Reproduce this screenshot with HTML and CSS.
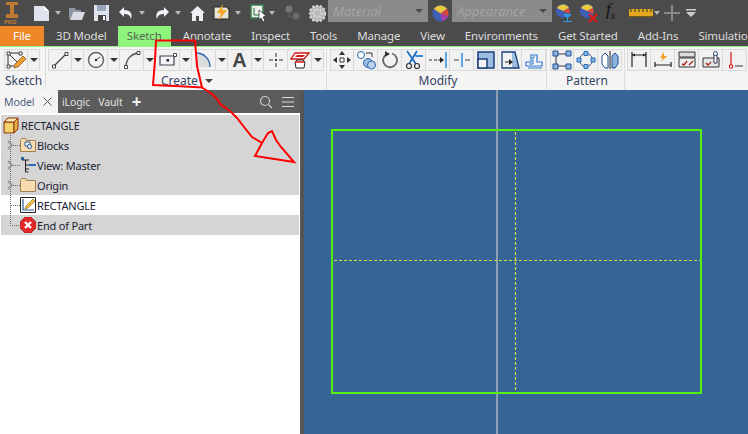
FILE: index.html
```html
<!DOCTYPE html>
<html lang="en">
<head>
    <meta charset="UTF-8">
    <meta name="viewport" content="width=device-width, initial-scale=1.0">
    <title>RECTANGLE - Sketch</title>
    <link rel="stylesheet" href="styles.css">
</head>
<body>
    <!-- quick access toolbar -->
    <div class="quick">
        <svg width="18" height="24" viewBox="0 0 18 24"><path d="M3 1h12v3h-4v9h4v4H3v-4h4V4H3z" fill="#c07a30"/><text x="1" y="23" class="pro">PRO</text></svg>
        <svg width="15" height="16" viewBox="0 0 15 16"><path d="M0 1h10l5 5v10H0z" fill="#dfe3ee"/><path d="M10 1l5 5h-5z" fill="#fff"/></svg>
        <i class="drop light"></i>
        <svg width="16" height="14" viewBox="0 0 16 14"><path d="M0 2h6l1 2h5v2H4L1 13H0z" fill="#8d97a8"/><path d="M4 6h12l-3 8H1z" fill="#d8dbe2"/></svg>
        <svg width="15" height="16" viewBox="0 0 15 16"><path d="M0 0h15v16H0z" fill="#dfe3ee"/><path d="M3 0h9v6H3z" fill="#9aa6be"/><path d="M4 10h8v6H4z" fill="#444"/><path d="M9 11h2v4H9z" fill="#fff"/></svg>
        <svg width="15" height="14" viewBox="0 0 15 14"><path d="M6 1L1 6l5 5V8c4 0 6 1 7 5 2-6-1-9-7-9z" fill="#eef0f5"/></svg>
        <i class="drop light"></i>
        <svg width="15" height="14" viewBox="0 0 15 14"><path d="M9 1l5 5-5 5V8C5 8 3 9 2 13 0 7 3 4 9 4z" fill="#eef0f5"/></svg>
        <i class="drop light"></i>
        <svg width="15" height="15" viewBox="0 0 15 15"><path d="M7.5 0L15 7h-2v8H9v-5H6v5H2V7H0z" fill="#eceef2"/></svg>
        <svg width="17" height="18" viewBox="0 0 17 18"><path d="M1 3h13l2 3v9H1z" fill="#e8e4d4" stroke="#222"/><path d="M10 0L4 9h4l-2 7 8-10H9z" fill="#f5a623"/></svg>
        <i class="drop light"></i>
        <svg width="17" height="18" viewBox="0 0 17 18"><path d="M1 1h12v13H1z" fill="#eef1ee" stroke="#3b7d4d" stroke-width="1.5"/><path d="M4 4v7h6" fill="none" stroke="#1d6b35"/><path d="M9 6l7 6-3 1 2 4-2 1-2-4-2 2z" fill="#fff" stroke="#222" stroke-width=".7"/></svg>
        <i class="drop light"></i>
        <svg width="16" height="16" viewBox="0 0 16 16"><circle cx="5" cy="4" r="3.5" fill="#777"/><circle cx="12" cy="11" r="3.5" fill="#6b6b6b"/><path d="M5 8v4h3" stroke="#666" fill="none"/></svg>
        <svg width="17" height="17" viewBox="0 0 17 17"><circle cx="8.5" cy="8.5" r="8" fill="#b9b9b9"/><circle cx="8.5" cy="8.5" r="8" fill="none" stroke="#ddd" stroke-width="2" stroke-dasharray="2 2"/><circle cx="8.5" cy="8.5" r="4" fill="none" stroke="#eee" stroke-width="2" stroke-dasharray="1 2"/></svg>
        <div class="combo"><em>Material</em><i class="drop dim"></i></div>
        <svg width="17" height="17" viewBox="0 0 17 17"><circle cx="8.5" cy="8.5" r="8" fill="#3f5fb5"/><path d="M8.5 8.5L2 4a8 8 0 0 1 13-.2z" fill="#e8c83c"/><path d="M8.5 8.5L15 3.8a8 8 0 0 1 1 7.5z" fill="#d9483b"/><path d="M8.5 8.5l7.5 2.8a8 8 0 0 1-6 5z" fill="#a63fa8"/></svg>
        <div class="combo"><em>Appearance</em><i class="drop dim"></i></div>
        <svg width="17" height="19" viewBox="0 0 17 19"><circle cx="7" cy="7" r="7" fill="#3f5fb5"/><path d="M7 7L1 4a7 7 0 0 1 12 0z" fill="#e8c83c"/><path d="M7 7l6-3a7 7 0 0 1 0 6z" fill="#d9483b"/><path d="M7 10h9l-4 4v3h4v1H7v-1h4v-3z" fill="#2aa0e0"/></svg>
        <svg width="18" height="19" viewBox="0 0 18 19"><circle cx="7" cy="7" r="7" fill="#3f5fb5"/><path d="M7 7L1 4a7 7 0 0 1 12 0z" fill="#e8c83c"/><path d="M7 7l6-3a7 7 0 0 1 0 6z" fill="#d9483b"/><path d="M9 10l8 8M17 10l-8 8" stroke="#e01818" stroke-width="2.2"/></svg>
        <span class="fx">f<sub>x</sub></span>
        <svg width="24" height="8" viewBox="0 0 24 8"><path d="M0 0h24v8H0z" fill="#e2a91f"/><path d="M2 0v3M6 0v3M10 0v3M14 0v3M18 0v3M22 0v3" stroke="#333"/><path d="M0 7.5h24" stroke="#7a5a10"/></svg>
        <i class="drop light"></i>
        <svg width="16" height="16" viewBox="0 0 16 16"><path d="M7 0h2v7h7v2H9v7H7V9H0V7h7z" fill="#8a8a8a"/></svg>
        <svg width="10" height="8" viewBox="0 0 10 8"><path d="M0 0h10v1.500H0zM0 3h10L5 8z" fill="#ccc"/></svg>
    </div>

    <nav class="tabs">
        <span class="tab file">File</span>
        <span class="tab">3D Model</span>
        <span class="tab active">Sketch</span>
        <span class="tab">Annotate</span>
        <span class="tab">Inspect</span>
        <span class="tab">Tools</span>
        <span class="tab">Manage</span>
        <span class="tab">View</span>
        <span class="tab">Environments</span>
        <span class="tab">Get Started</span>
        <span class="tab">Add-Ins</span>
        <span class="tab">Simulation</span>
    </nav>

    <div class="ribbon">
        <section class="panel p-sketch">
            <div class="tools">
                <button class="btn"><svg width="20" height="20" viewBox="0 0 20 20"><path d="M2 3h12M2 3v13h6M2 3l10 10" stroke="#333" fill="none"/><path d="M1 2h3v3H1zM13 2h3v3h-3zM1 15h3v3H1z" fill="#fff" stroke="#333" stroke-width=".9"/><path d="M17 6l3 3-8 8-4 1 1-4z" fill="#f0a030" stroke="#8a4a10" stroke-width=".7"/></svg></button>
                <button class="more"><i class="drop"></i></button>
            </div>
            <label>Sketch</label>
        </section>

        <section class="panel p-create">
            <div class="tools">
                <button class="btn"><svg width="20" height="20" viewBox="0 0 20 20"><path d="M4 16L16 4" stroke="#444" stroke-width="1.200"/><path d="M2.500 15h3v3h-3zM15 2.500h3v3h-3z" fill="#fff" stroke="#333" stroke-width=".9"/></svg></button>
                <button class="more"><i class="drop"></i></button>
                <button class="btn"><svg width="20" height="20" viewBox="0 0 20 20"><circle cx="10" cy="10" r="7.500" fill="#f4f4f4" stroke="#666" stroke-width="1.500"/><path d="M10 10l4-3" stroke="#444"/><path d="M9 9h2v2H9z" fill="#222"/></svg></button>
                <button class="more"><i class="drop"></i></button>
                <button class="btn"><svg width="20" height="20" viewBox="0 0 20 20"><path d="M4 17C4 9 9 4 16 3" stroke="#555" stroke-width="1.400" fill="none"/><path d="M2.500 15.500h3v3h-3zM15 1.500h3v3h-3z" fill="#fff" stroke="#333" stroke-width=".9"/></svg></button>
                <button class="more"><i class="drop"></i></button>
                <button class="btn"><svg width="20" height="20" viewBox="0 0 20 20"><path d="M2 6h14v9H2z" fill="#f4f4f4" stroke="#445" stroke-width="1.200"/><path d="M8.500 9h2.500v2.500H8.500z" fill="#223"/><path d="M15.500 3.500h3v3h-3z" fill="#fff" stroke="#333" stroke-width=".9"/></svg></button>
                <button class="more"><i class="drop"></i></button>
                <button class="btn"><svg width="20" height="20" viewBox="0 0 20 20"><path d="M2 3c8 0 14 6 14 14H2z" fill="#dcdcdc"/><path d="M2 3c8 0 14 6 14 14" fill="none" stroke="#2a66b0" stroke-width="1.300"/></svg></button>
                <button class="more"><i class="drop"></i></button>
                <button class="btn"><span class="big-a">A</span></button>
                <button class="more"><i class="drop"></i></button>
                <button class="btn"><svg width="20" height="20" viewBox="0 0 20 20"><path d="M10 3v4M10 13v4M3 10h4M13 10h4" stroke="#333"/><path d="M9 9h2v2H9z" fill="#333"/></svg></button>
                <button class="btn"><svg width="20" height="20" viewBox="0 0 20 20"><path d="M5 3h14l-5 6H1z" fill="#fff" stroke="#d01818" stroke-width="1.300"/><path d="M7 5h8l-2 2H5z" fill="#d01818"/><path d="M7 10h6l2 2-1 6H6l-1-6z" fill="#fff" stroke="#222"/><path d="M5 12h9" stroke="#d01818" stroke-width="1.500"/></svg></button>
                <button class="more"><i class="drop"></i></button>
            </div>
            <label>Create <i class="drop mid"></i></label>
        </section>

        <section class="panel p-modify">
            <div class="tools">
                <button class="btn"><svg width="20" height="20" viewBox="0 0 20 20"><path d="M10 1l3 4H7zM10 19l-3-4h6zM1 10l4-3v6zM19 10l-4 3V7z" fill="#333"/><path d="M8 8h4v4H8z" fill="#fff" stroke="#333"/></svg></button>
                <button class="btn"><svg width="20" height="20" viewBox="0 0 20 20"><circle cx="5" cy="5" r="3.500" fill="#fff" stroke="#2a66b0"/><circle cx="12" cy="13" r="4.500" fill="#9dbde0" stroke="#2a66b0"/><circle cx="15.500" cy="15" r="4" fill="#bcd2ea" stroke="#2a66b0"/><path d="M10 3h6v4" fill="none" stroke="#333"/></svg></button>
                <button class="btn"><svg width="20" height="20" viewBox="0 0 20 20"><path d="M12 3.500A7 7 0 1 1 6 4.500" fill="none" stroke="#666" stroke-width="1.800"/><path d="M5 1l5 3-5 3z" fill="#333"/></svg></button>
                <button class="btn"><svg width="20" height="20" viewBox="0 0 20 20"><path d="M10 5h9v2h-7z" fill="#2c8de0"/><path d="M3 1l9 13M13 1L5 14" stroke="#1d6fc0" stroke-width="1.800"/><circle cx="5" cy="16" r="2.500" fill="none" stroke="#333" stroke-width="1.200"/><circle cx="13" cy="16" r="2.500" fill="none" stroke="#333" stroke-width="1.200"/></svg></button>
                <button class="btn"><svg width="20" height="20" viewBox="0 0 20 20"><path d="M1 10h3M6 10h3" stroke="#333"/><path d="M10 10h5" stroke="#333"/><path d="M12 7l4 3-4 3z" fill="#222"/><path d="M18 2v16" stroke="#2c8de0" stroke-width="1.500"/></svg></button>
                <button class="btn"><svg width="20" height="20" viewBox="0 0 20 20"><path d="M2 10h5M13 10h5" stroke="#444"/><path d="M10 3v14" stroke="#2c8de0" stroke-width="1.500"/></svg></button>
                <button class="btn"><svg width="20" height="20" viewBox="0 0 20 20"><path d="M2 2h16v16H2z" fill="#9dbde0" stroke="#1c3f7a" stroke-width="1.500"/><path d="M2 9h9v9H2z" fill="#f4f4f4" stroke="#1c3f7a" stroke-width="1.500"/></svg></button>
                <button class="btn"><svg width="20" height="20" viewBox="0 0 20 20"><path d="M12 2h3l4 16h-7z" fill="#9dbde0"/><path d="M2 2h13l4 16H2z" fill="none" stroke="#1c3f7a" stroke-width="1.300"/><path d="M5 12h5" stroke="#222"/><path d="M9 9l4 3-4 3z" fill="#222"/></svg></button>
                <button class="btn"><svg width="20" height="20" viewBox="0 0 20 20"><path d="M2 16v-4h5V5h6v7h5v4z" fill="#f4f4f4" stroke="#2c7cd0" stroke-width="1.200"/><path d="M4 18h14M5 14h4V7h2" fill="none" stroke="#2c7cd0"/></svg></button>
            </div>
            <label>Modify</label>
        </section>

        <section class="panel p-pattern">
            <div class="tools">
                <button class="btn"><svg width="20" height="20" viewBox="0 0 20 20"><path d="M4 4h12M4 4v12M4 16h12" stroke="#333"/><path d="M1 1h5v5H1zM14 1h5v5h-5zM1 14h5v5H1zM14 14h5v5h-5z" fill="#8fb4dc" stroke="#1c4f9a"/></svg></button>
                <button class="btn"><svg width="20" height="20" viewBox="0 0 20 20"><circle cx="10" cy="10" r="6.500" fill="none" stroke="#555"/><path d="M8 1.500h4v4H8zM8 14.500h4v4H8zM1 8h4v4H1zM15 8h4v4h-4z" fill="#8fb4dc" stroke="#1c6fc0"/></svg></button>
                <button class="btn"><svg width="20" height="20" viewBox="0 0 20 20"><path d="M10 1v18" stroke="#222"/><path d="M2 6l3-3 3 3v12H5l-3-4z" fill="#fff" stroke="#1c4f9a"/><path d="M18 6l-3-3-3 3v12h3l3-4z" fill="#8fb4dc" stroke="#1c4f9a"/></svg></button>
            </div>
            <label>Pattern</label>
        </section>

        <section class="panel p-rest">
            <div class="tools">
                <button class="btn"><svg width="20" height="20" viewBox="0 0 20 20"><path d="M3 2v15M17 2v15" stroke="#222" stroke-width="1.200"/><path d="M3 5h14" stroke="#222"/><path d="M3 5l3-1.500v3zM17 5l-3-1.500v3z" fill="#222"/></svg></button>
                <button class="btn"><svg width="20" height="20" viewBox="0 0 20 20"><path d="M2 12v5M18 12v5M2 15h16" stroke="#222" stroke-width="1.200"/><path d="M11 2L7 8h3l-2 4 6-6h-3z" fill="#f0a020"/></svg></button>
                <button class="btn"><svg width="20" height="20" viewBox="0 0 20 20"><path d="M2 2h16v5H2z" fill="#e0e0e0" stroke="#333"/><path d="M2 8h16v9H2z" fill="#eee" stroke="#333"/><path d="M5 14l2 1 3-4M12 15l4-4" fill="none" stroke="#a82a1a" stroke-width="1.400"/></svg></button>
                <button class="btn"><svg width="20" height="20" viewBox="0 0 20 20"><path d="M2 8h16v9H2z" fill="#e6e6e6" stroke="#333"/><path d="M5 13l2 2 3-3" fill="none" stroke="#a82a1a" stroke-width="1.400"/><path d="M13 4h3v9h-3z" fill="#fff" stroke="#335"/><circle cx="14.500" cy="3.500" r="2" fill="#fff" stroke="#246"/></svg></button>
                <button class="btn"><svg width="20" height="20" viewBox="0 0 20 20"><path d="M6 2v13" stroke="#d01818" stroke-width="1.200"/><path d="M4.500 15h3v3h-3z" fill="#fff" stroke="#d01818"/><path d="M10 16h8" stroke="#333"/></svg></button>
            </div>
        </section>
    </div>

    <div class="workspace">
        <aside class="browser">
            <header class="browser-head">
                <div class="model-tab">Model <svg width="9" height="9" viewBox="0 0 9 9"><path d="M0.500 0.500l8 8M8.500 0.500l-8 8" stroke="#555"/></svg></div>
                <span class="head-link ilogic">iLogic</span>
                <span class="head-link vault">Vault</span>
                <span class="plus">+</span>
                <svg class="search" width="14" height="14" viewBox="0 0 14 14"><circle cx="6" cy="6" r="4.500" fill="none" stroke="#ccc" stroke-width="1.200"/><path d="M9.500 9.500L13 13" stroke="#ccc" stroke-width="1.300"/></svg>
                <svg class="menu" width="12" height="10" viewBox="0 0 12 10"><path d="M0 .5h12M0 5h12M0 9.500h12" stroke="#ddd"/></svg>
            </header>
            <ul class="tree">
                <li class="row root">
                    <svg width="16" height="17" viewBox="0 0 16 17"><path d="M1 5h10v11H1z" fill="#f4d26a" stroke="#8a2f10"/><path d="M1 5l4-4h10l-4 4z" fill="#fbe9a8" stroke="#8a2f10"/><path d="M11 5l4-4v11l-4 4z" fill="#e8b040" stroke="#8a2f10"/></svg>
                    RECTANGLE
                </li>
                <li class="row">
                    <svg class="branch" width="19" height="20" viewBox="0 0 19 20"><path d="M9.500 0v20M12 10.500h7" stroke="#666" stroke-dasharray="1 1"/><path d="M7 6l4 4-4 4" fill="none" stroke="#999" stroke-width="2"/></svg>
                    <svg class="ico" width="16" height="14" viewBox="0 0 16 14"><path d="M0.500 13.500v-11l1-2h4l1 2h9v11z" fill="#f6dcae" stroke="#a08050"/><path d="M5 4h5v4H5z" fill="#fff" stroke="#2a5a9a"/><circle cx="9.500" cy="8.500" r="2.200" fill="#d8e4f4" stroke="#2a5a9a"/></svg>
                    Blocks
                </li>
                <li class="row">
                    <svg class="branch" width="19" height="20" viewBox="0 0 19 20"><path d="M9.500 0v20M12 10.500h7" stroke="#666" stroke-dasharray="1 1"/><path d="M7 6l4 4-4 4" fill="none" stroke="#999" stroke-width="2"/></svg>
                    <svg class="ico" width="16" height="16" viewBox="0 0 16 16"><path d="M1 0h3v3H1z" fill="#2a6ab0"/><path d="M5.500 3v12M2 3h7M2 3v0M5.500 15h3" stroke="#222" fill="none"/><path d="M9 7h7v2H9z" fill="#2a6ab0"/><path d="M6 8h3M6 12h3" stroke="#222"/></svg>
                    View: Master
                </li>
                <li class="row">
                    <svg class="branch" width="19" height="20" viewBox="0 0 19 20"><path d="M9.500 0v20M12 10.500h7" stroke="#666" stroke-dasharray="1 1"/><path d="M7 6l4 4-4 4" fill="none" stroke="#999" stroke-width="2"/></svg>
                    <svg class="ico" width="16" height="14" viewBox="0 0 16 14"><path d="M0.500 13.500v-11l1-2h4l1 2h9v11z" fill="#f6dcae" stroke="#a08050"/></svg>
                    Origin
                </li>
                <li class="row clear">
                    <svg class="branch" width="19" height="20" viewBox="0 0 19 20"><path d="M9.500 0v20M10 10.500h9" stroke="#666" stroke-dasharray="1 1"/></svg>
                    <svg class="ico" width="16" height="16" viewBox="0 0 16 16"><path d="M.5.500h15v15H.500z" fill="#fff" stroke="#222"/><path d="M3 2v11h11" fill="none" stroke="#2a5a9a" stroke-width="1.200"/><path d="M13 2l2 2-7 7-3 1 1-3z" fill="#f0c040" stroke="#806020" stroke-width=".6"/></svg>
                    RECTANGLE
                </li>
                <li class="row">
                    <svg class="branch" width="19" height="20" viewBox="0 0 19 20"><path d="M9.500 0v10.500h9.500" fill="none" stroke="#666" stroke-dasharray="1 1"/></svg>
                    <svg class="ico" width="16" height="16" viewBox="0 0 16 16"><path d="M5 0h6l5 5v6l-5 5H5l-5-5V5z" fill="#e02a2a" stroke="#8a1010" stroke-width=".6"/><path d="M5 5l6 6M11 5l-6 6" stroke="#fff" stroke-width="2.400"/></svg>
                    End of Part
                </li>
            </ul>
        </aside>
        <main class="canvas">
            <svg class="drawing" width="444" height="344" viewBox="304 90 444 344">
                <path d="M497 90v344" stroke="#8f9fb3" stroke-width="2"/>
                <rect x="332" y="130" width="369" height="263" fill="none" stroke="#55ee11" stroke-width="2"/>
                <path d="M515.500 132v260" stroke="#d9dc4a" stroke-width="1.200" stroke-dasharray="3 2"/>
                <path d="M334 260.500h366" stroke="#d9dc4a" stroke-width="1" stroke-dasharray="3 2"/>
            </svg>
        </main>
    </div>

    <!-- red markup drawn over the screenshot -->
    <svg class="markup" width="748" height="434" viewBox="0 0 748 434">
        <path d="M156 40.500L195 40.500L197 66L202 87.500L175 86L153 85L155 60Z" fill="none" stroke="#f00" stroke-width="2"/>
        <path d="M202 87.500L212 94L218 100L220 104L230 111L237 118L244 127L252 137L262 143L268 133L272 131L276 140L281 147L294 162L255 156L262 143" fill="none" stroke="#f00" stroke-width="2"/>
    </svg>
</body>
</html>
```

FILE: styles.css
```css
* {
    box-sizing: border-box;
}

html, body {
    margin: 0;
    padding: 0;
}

body {
    width: 748px;
    height: 434px;
    overflow: hidden;
    position: relative;
    font-family: "Noto Sans", sans-serif;
    font-size: 12px;
    background: #fff;
}

.drop {
    display: block;
    width: 0;
    height: 0;
    border-left: 4px solid transparent;
    border-right: 4px solid transparent;
    border-top: 4px solid #333;
}

.drop.light {
    border-left-width: 3px;
    border-right-width: 3px;
    border-top-color: #b5b5b5;
}

.drop.dim {
    border-top-color: #4c4c4c;
}

.drop.mid {
    display: inline-block;
    margin-left: 4px;
    vertical-align: 2px;
    border-top-color: #444;
}

/* quick access */
.quick {
    height: 26px;
    background: #4b4b4b;
    padding-left: 3px;
    display: grid;
    grid-template-columns: 31px 21px 14px 25px 24px 21px 16px 20px 15px 23px 22px 15px 19px 15px 25px 19px 104px 20px 104px 24px 26px 23px 25px 10px 22px auto;
    align-items: center;
    overflow: hidden;
}

.pro {
    font-size: 6px;
    font-weight: bold;
    fill: #c07a30;
}

.combo {
    width: 100px;
    height: 22px;
    margin-top: -4px;
    padding: 0 5px;
    background: #8a8a8a;
    display: flex;
    align-items: center;
    justify-content: space-between;
}

.combo em {
    color: #a6a6a6;
    font-family: "Open Sans", sans-serif;
    font-size: 13px;
}

.fx {
    font-family: "Liberation Serif", serif;
    font-style: italic;
    font-size: 17px;
    line-height: 18px;
    color: #111;
}

.fx sub {
    font-size: 10px;
}

/* tabs */
.tabs {
    height: 20px;
    background: #4b4b4b;
    display: flex;
    white-space: nowrap;
    overflow: hidden;
}

.tab {
    flex: none;
    padding: 0 10px;
    line-height: 20px;
    color: #dcdcdc;
    font-size: 11.5px;
    letter-spacing: -0.15px;
}

.tab.file {
    width: 44px;
    margin-right: 2px;
    padding: 0;
    background: #ef8627;
    color: #fff;
    text-align: center;
}

.tab.active {
    width: 53px;
    padding: 0;
    margin: 0 2px 0 1px;
    background: #8ef47e;
    color: #566a53;
    text-align: center;
}

/* ribbon */
.ribbon {
    height: 44px;
    border-top: 1px solid #8ef47e;
    background: #f4f4f4;
    display: flex;
    overflow: hidden;
}

.panel {
    flex: none;
    height: 43px;
    padding: 2px 0 0 4px;
    border-right: 1px solid #dcdcdc;
}

.p-sketch { width: 46px; }
.p-create { width: 281px; padding-left: 2px; }
.p-modify { width: 220px; padding-left: 3px; }
.p-pattern { width: 78px; padding-left: 3px; }
.p-rest { width: 123px; padding-left: 2px; border-right: 0; }

.tools {
    display: flex;
    height: 22px;
}

.btn, .more {
    flex: none;
    height: 22px;
    padding: 0;
    margin: 0;
    background: #f1f1f1;
    border: 1px solid #d9d9d9;
    border-left-width: 0;
    display: flex;
    align-items: center;
    justify-content: center;
}

.tools > :first-child {
    border-left-width: 1px;
}

.btn {
    width: 24px;
}

.more {
    width: 12px;
}

.big-a {
    font-family: "Liberation Sans", sans-serif;
    font-weight: bold;
    font-size: 20px;
    line-height: 20px;
    color: #444;
}

.panel label {
    display: block;
    margin-top: 1px;
    line-height: 18px;
    text-align: center;
    color: #34435f;
    font-size: 12px;
}

.p-sketch label {
    text-align: left;
    padding-left: 1px;
}

/* browser + canvas */
.workspace {
    height: 344px;
    display: flex;
}

.browser {
    width: 304px;
    flex: none;
    background: #fff;
    border-right: 4px solid #555;
}

.browser-head {
    height: 23px;
    background: #5c5c5c;
    display: flex;
    align-items: center;
    color: #e2e2e2;
    font-size: 10.5px;
    letter-spacing: -0.1px;
}

.model-tab {
    width: 58px;
    height: 23px;
    background: #f4f4f4;
    color: #4f5f80;
    padding-left: 4px;
    display: flex;
    align-items: center;
    gap: 9px;
}

.head-link.ilogic {
    margin-left: 4px;
}

.head-link.vault {
    margin-left: 8px;
}

.plus {
    margin-left: 9px;
    font-size: 17px;
    font-weight: bold;
    line-height: 20px;
    color: #eee;
}

.search {
    margin-left: auto;
    margin-right: 9px;
}

.menu {
    margin-right: 6px;
}

.tree {
    list-style: none;
    margin: 2px 0 0;
    padding: 0 1px;
}

.row {
    height: 20px;
    background: #d5d5d5;
    color: #1c2433;
    display: flex;
    align-items: center;
    font-size: 11px;
    letter-spacing: -0.2px;
    white-space: nowrap;
}

.row.root {
    padding-left: 2px;
}

.row.root svg {
    margin-right: 2px;
}

.row.clear {
    background: #fff;
}

.ico {
    flex: none;
    margin-right: 1px;
}

.branch {
    flex: none;
}

.canvas {
    flex: 1;
    background: #346595;
}

.drawing {
    display: block;
}

.markup {
    position: absolute;
    left: 0;
    top: 0;
    pointer-events: none;
}
```
